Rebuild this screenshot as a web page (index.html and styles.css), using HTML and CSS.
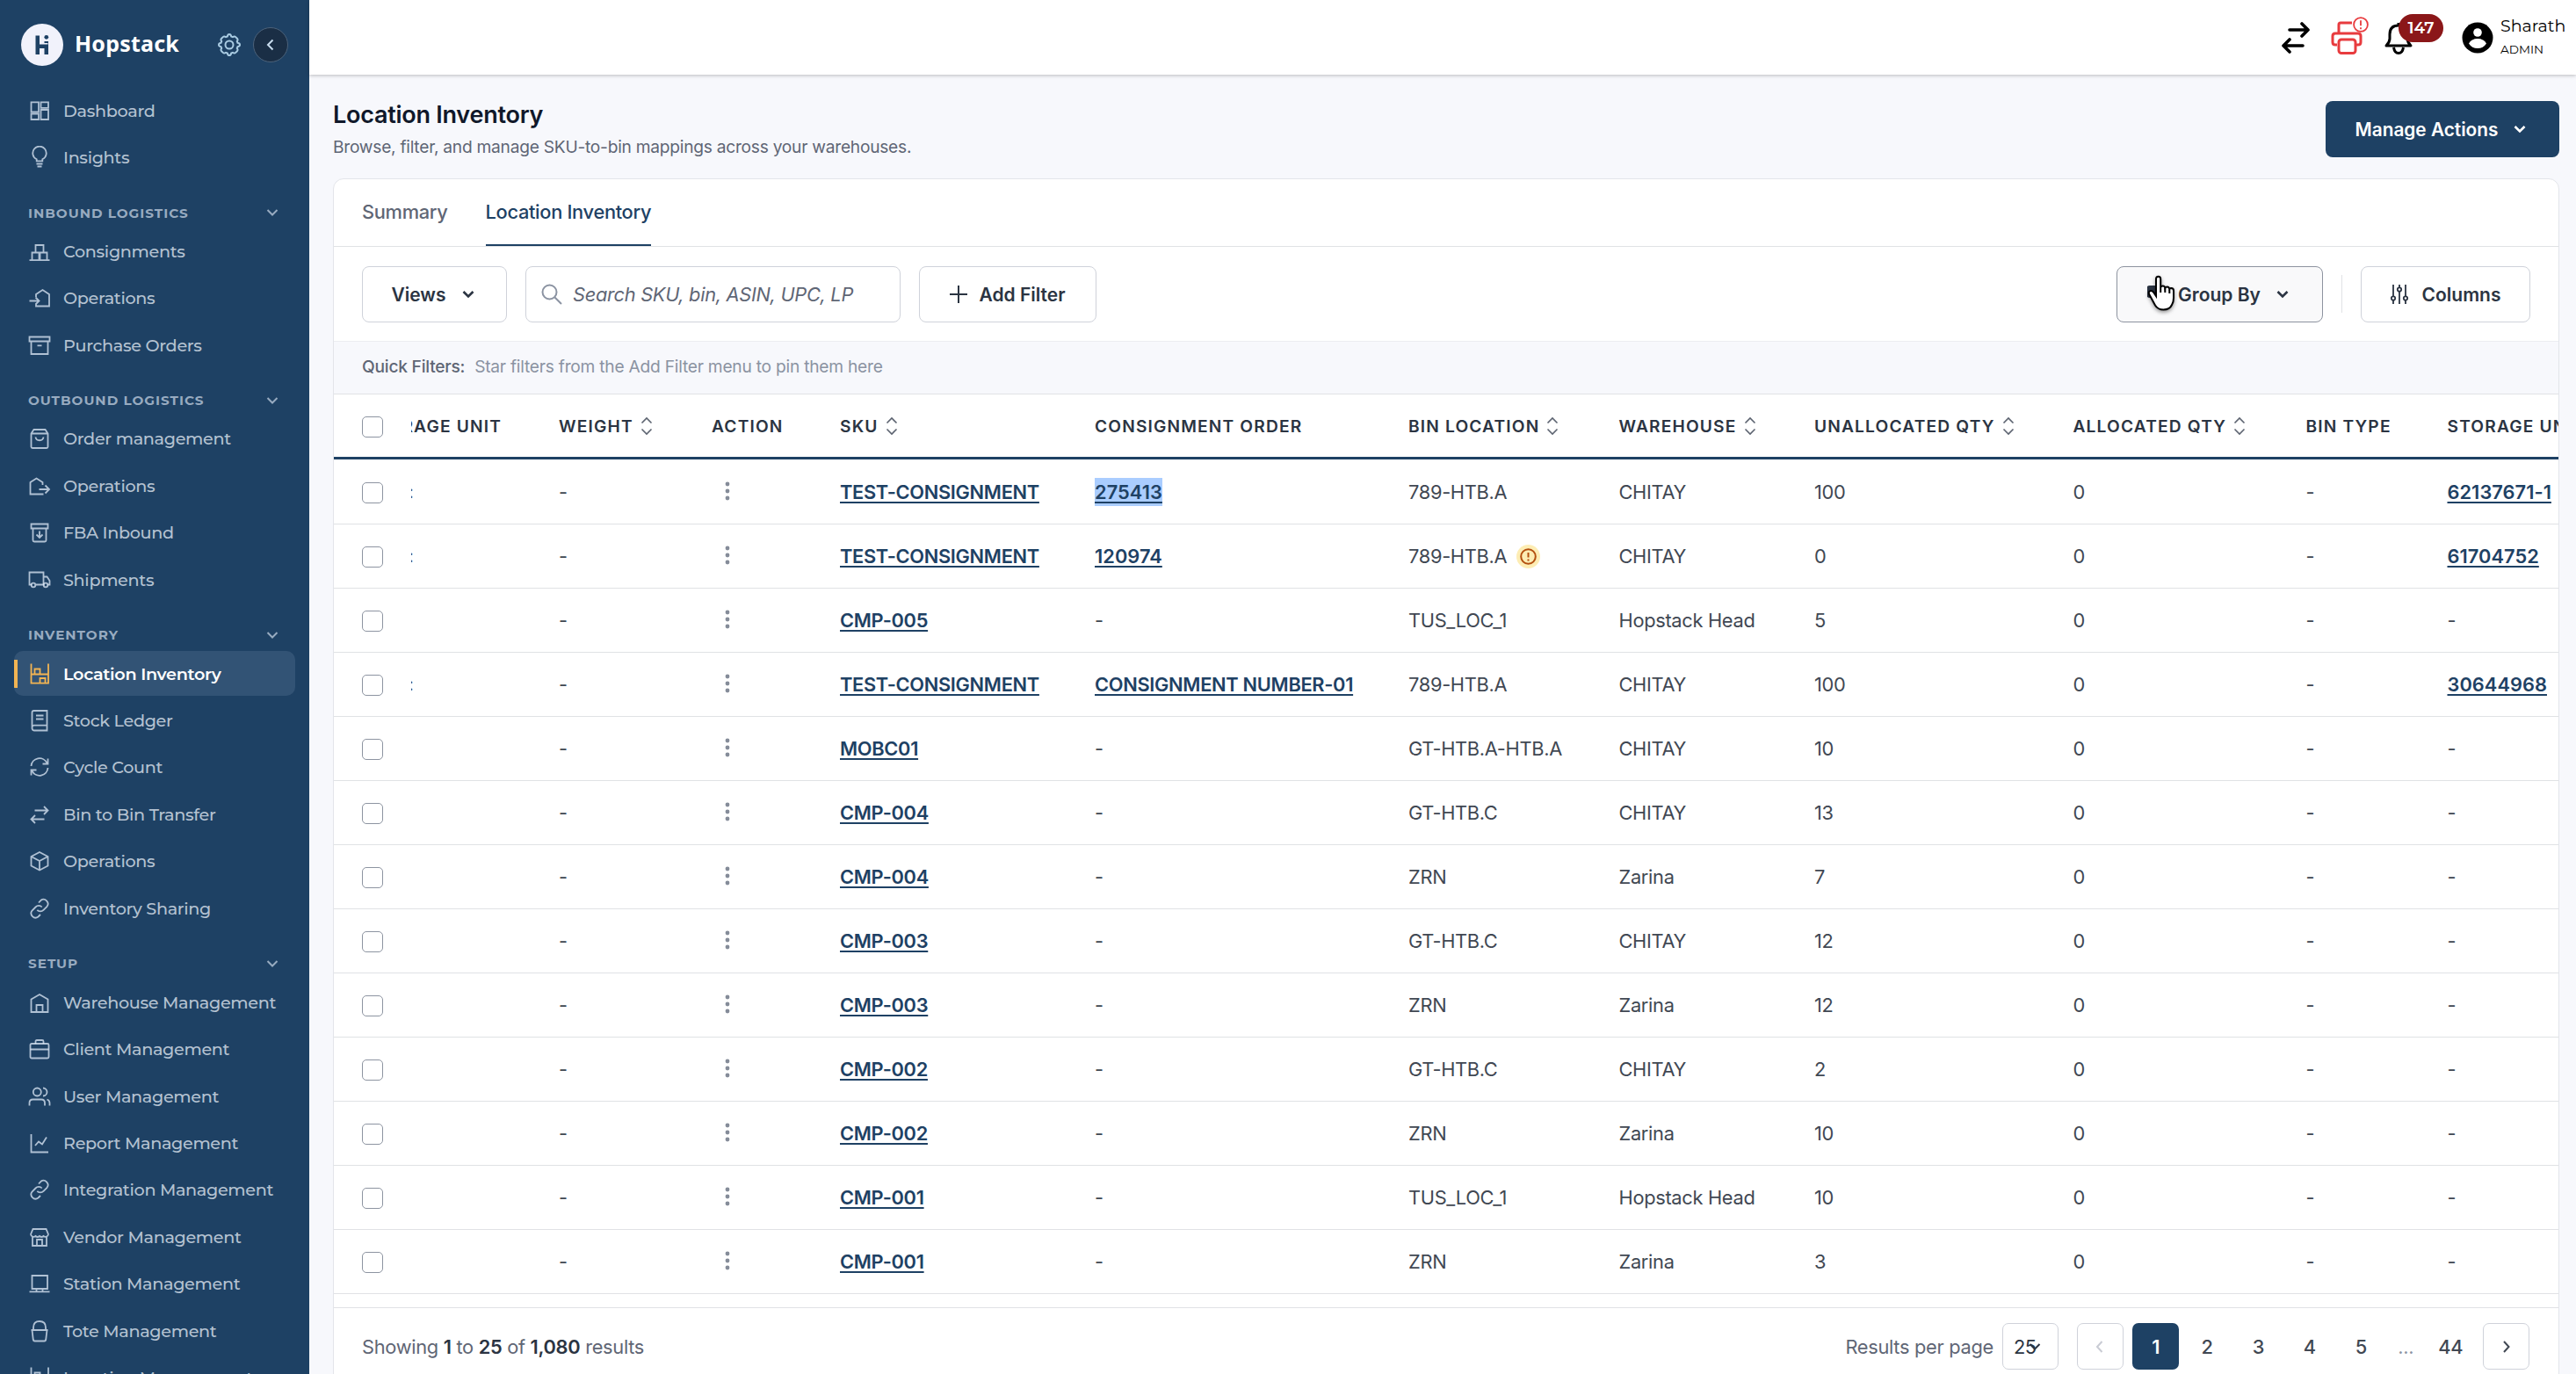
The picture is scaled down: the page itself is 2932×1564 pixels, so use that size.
FILE: index.html
```
<!DOCTYPE html>
<html lang="en">

<head>
    <meta charset="utf-8">
    <title>Location Inventory - Hopstack</title>
    <link rel="stylesheet" href="styles.css">
</head>

<body>
    <svg class="sprite">
        <symbol id="dashboard" viewBox="0 0 26 26"><path d="M3.5 3.3h8.5v11H3.5zM3.5 16.5H12v6.5H3.5zM14.5 3.3H23v6.5h-8.5zM14.5 12H23v11h-8.5z"/></symbol>
        <symbol id="insights" viewBox="0 0 26 26"><path d="M9.7 17.3v-2a7.7 7.7 0 1 1 6.6 0v2zM9.5 20.5h7M10.5 23.5h5"/></symbol>
        <symbol id="consignments" viewBox="0 0 26 26"><path d="M8.5 14V6h9v8M4.5 23v-8.5h8V23M13.5 23v-8.5h8V23M1.5 23.2h23"/></symbol>
        <symbol id="opsin" viewBox="0 0 26 26"><path d="M9 12V9l7.5-5 7.5 5v13.5H9V20M1.5 16.5h10M8.5 12.5l4 4-4 4"/></symbol>
        <symbol id="archive" viewBox="0 0 26 26"><path d="M1.5 3.5h23v5H1.5zM3.5 8.5V23h19V8.5M10.5 13.3h5"/></symbol>
        <symbol id="bag" viewBox="0 0 26 26"><path d="M3.5 7.5l3-4.5h13l3 4.5v15a1.500 1.500 0 0 1-1.500 1.500H5a1.500 1.500 0 0 1-1.500-1.500zM3.500 7.500h19M8.500 11.500c.7 5 8.300 5 9 0"/></symbol>
        <symbol id="opsout" viewBox="0 0 26 26"><path d="M16.500 12V9l-7-4.500L2.500 9v13.500h15M12.500 17h11M19.500 12.500L24 17l-4.500 4.500"/></symbol>
        <symbol id="fba" viewBox="0 0 26 26"><path d="M3.500 3.500h19v5h-19zM5.500 8.500V22q0 1.500 1.500 1.500h12q1.500 0 1.500-1.500V8.500M13 11.500v7M9.500 15.500L13 19l3.500-3.500"/></symbol>
        <symbol id="truck" viewBox="0 0 26 26"><path d="M4 18.500H1.500v-14h16v14H9M17.500 9.500h4l3 4.500v4.500h-2"/><circle cx="6" cy="19" r="2.300"/><circle cx="20" cy="19" r="2.300"/></symbol>
        <symbol id="rack" viewBox="0 0 26 26"><path d="M3.500 1.500v23M23 1.500v23M3.500 13.500H23M3.500 23.700H23M7.500 13V7.500h6V13M13.500 23.500V18h6v5.500"/></symbol>
        <symbol id="ledger" viewBox="0 0 26 26"><path d="M4.500 20.500V4q0-2 2-2h15v22.500h-15q-2-.5-2-3t2-2.800h15M9 7.500h8.500M9 11.500h8.500"/></symbol>
        <symbol id="cycle" viewBox="0 0 26 26"><path d="M3.500 12a9.500 9.500 0 0 1 18-3.500M22.500 3.500v6h-6M22.500 14a9.500 9.500 0 0 1-18 3.500M3.500 22.500v-6h6"/></symbol>
        <symbol id="swap" viewBox="0 0 26 26"><path d="M7.500 8.500h15M18 4l4.500 4.500L18 13M18.500 18.500h-15M8 14l-4.500 4.500L8 23"/></symbol>
        <symbol id="box" viewBox="0 0 26 26"><path d="M13 3l9.500 5v10.500l-9.500 5-9.500-5V8zM3.500 8l9.500 5 9.500-5M13 13v10.500"/></symbol>
        <symbol id="link" viewBox="0 0 26 26"><path d="M12 6.500l2.500-2.700a5 5 0 0 1 7 7l-4 4a5 5 0 0 1-7.200 0M14 20l-2.500 2.500a5 5 0 0 1-7-7l4-4a5 5 0 0 1 7.200 0"/></symbol>
        <symbol id="house" viewBox="0 0 26 26"><path d="M3.500 24V9.500L13 4l9.500 5.500V24zM9.500 24v-8h7v8"/></symbol>
        <symbol id="briefcase" viewBox="0 0 26 26"><rect x="2.500" y="7" width="21" height="16.500" rx="1.500"/><path d="M8.500 7V4.500Q8.500 3 10 3h6q1.500 0 1.500 1.500V7M2.500 13.500h21"/></symbol>
        <symbol id="users" viewBox="0 0 26 26"><circle cx="10.300" cy="8" r="4.500"/><path d="M1.500 23.500v-3q0-4 4-4H15q4 0 4 4v3M17 3.500a4.500 4.500 0 0 1 0 9M21.500 16.500q3 1 3 4v3"/></symbol>
        <symbol id="report" viewBox="0 0 26 26"><path d="M3.500 3v20.500H23M8 16l4-4.500 4 3 5-8"/></symbol>
        <symbol id="shop" viewBox="0 0 26 26"><path d="M5.500 4h15l2.500 6a3.300 3.300 0 0 1-5.500 2 3.300 3.300 0 0 1-4.500 0 3.300 3.300 0 0 1-4.500 0A3.300 3.300 0 0 1 3 10zM5 12.500V23h16V12.500M10 23v-7h6v7"/></symbol>
        <symbol id="laptop" viewBox="0 0 26 26"><path d="M4.500 4H22v15H4.500zM1.500 22.300h23M9.500 19.500V22M16.500 19.500V22"/></symbol>
        <symbol id="tote" viewBox="0 0 26 26"><path d="M3.500 12h19M4.500 12l1.300 11q.3 1.500 1.700 1.500h11q1.400 0 1.700-1.500l1.300-11M6 12V9q0-7 7-7t7 7v3"/></symbol>
        <symbol id="chevron" viewBox="0 0 14 14"><path d="M1.500 4L7 9.500 12.500 4"/></symbol>
        <symbol id="sort" viewBox="0 0 14 22"><path d="M1.500 7.500L7 2l5.500 5.500M1.500 14.500L7 20l5.500-5.500"/></symbol>
    </svg>

    <aside class="sidebar">
        <div class="brand">
            <svg class="logo" viewBox="0 0 48 48">
                <circle cx="24" cy="24" r="24" fill="#f1f2fb"/>
                <path fill="#1e4164" d="M16.500 13.500H21v10h9.500V21h.5v14h-4.500v-7H21v7h-4.500zM26.500 20H31v2h-4.500z"/>
                <circle cx="28.800" cy="15.300" r="2.400" fill="#1e4164"/>
            </svg>
            <span class="brand-name">Hopstack</span>
            <svg class="gear" viewBox="0 0 28 28"><path d="M14 2q1.800 0 2.200 2.500l1.700.7q2-1.400 3.300-.1l1.700 1.700q1.300 1.300-.1 3.300l.7 1.700Q26 12.200 26 14t-2.500 2.200l-.7 1.700q1.400 2 .1 3.300l-1.700 1.700q-1.300 1.300-3.300-.1l-1.700.7Q15.800 26 14 26t-2.200-2.500l-1.700-.7q-2 1.400-3.300.1l-1.700-1.700q-1.300-1.300.1-3.300l-.7-1.700Q2 15.800 2 14t2.500-2.200l.7-1.700q-1.400-2-.1-3.300l1.700-1.700q1.300-1.300 3.300.1l1.700-.7Q12.200 2 14 2z"/><circle cx="14" cy="14" r="4.500"/></svg>
            <div class="collapse"><svg viewBox="0 0 14 14"><path d="M9.500 1.500L4 7l5.500 5.500"/></svg></div>
        </div>
        <nav id="nav"></nav>
    </aside>

    <main>
        <header class="topbar">
            <svg class="top-swap" viewBox="0 0 34 36"><path d="M10 9h21M24 2l7 7-7 7M25 27H3M10 20l-7 7 7 7"/></svg>
            <div class="printer">
                <svg viewBox="0 0 36 38"><path d="M9 13V4q0-2 2-2h13M7 27H5q-3 0-3-3v-7q0-3 3-3h26q3 0 3 3v7q0 3-3 3h-2"/><rect x="9" y="21" width="19" height="15.500" rx="3" fill="#fff"/></svg>
                <svg class="alert" viewBox="0 0 18 18"><circle cx="9" cy="9" r="7.900"/><path d="M9 4.300v6M9 12.200v2"/></svg>
            </div>
            <div class="bell">
                <svg viewBox="0 0 36 38"><path d="M4 28q4-4 4-8v-5Q8 5 18 5t10 10v5q0 4 4 8zM18 5V2M12.500 30q1 6.500 5.500 6.500t5.500-6.500"/></svg>
                <span class="badge">147</span>
            </div>
            <svg class="avatar" viewBox="0 0 36 36"><circle cx="18" cy="18" r="17.500" fill="#000"/><circle cx="18" cy="12" r="4.800" fill="#fff"/><path d="M8 24.500Q11 19 18 19t10 5.500Q24.500 30 18 30T8 24.500z" fill="#fff"/></svg>
            <div class="who">
                <span class="name">Sharath</span>
                <span class="role">ADMIN</span>
            </div>
        </header>

        <div class="page-head">
            <div>
                <h1>Location Inventory</h1>
                <p>Browse, filter, and manage SKU-to-bin mappings across your warehouses.</p>
            </div>
            <button class="primary">Manage Actions <svg class="chev"><use href="#chevron"/></svg></button>
        </div>

        <section class="card">
            <div class="tabs">
                <a class="tab">Summary</a>
                <a class="tab active">Location Inventory</a>
            </div>

            <div class="toolbar">
                <button class="btn views">Views <svg class="chev"><use href="#chevron"/></svg></button>
                <div class="search">
                    <svg viewBox="0 0 24 24"><circle cx="9.500" cy="9.500" r="8"/><path d="M15.500 15.500L23 23"/></svg>
                    <span>Search SKU, bin, ASIN, UPC, LP</span>
                </div>
                <button class="btn add"><svg class="plus" viewBox="0 0 20 20"><path d="M10 0v20M0 10h20"/></svg>Add Filter</button>
                <button class="btn group"><svg class="layers" viewBox="0 0 20 24"><rect x="0" y="3" width="11" height="12" rx="3"/></svg>Group By <svg class="chev"><use href="#chevron"/></svg>
                    <svg class="cursor" viewBox="0 0 32 42"><path d="M10 24V4.500q0-2.800 2.600-2.800t2.600 2.800V14q.3-1.500 2.500-1.500t2.600 2.300q.6-1.300 2.500-1.300t2.500 2.600q.6-1 2-1Q30 15.300 30 18v8q0 5-2 8-2.500 5.500-9.500 5.500-6.500 0-9.500-5L2.500 22.500q-1.700-3 .5-4.200 2-.9 4 1.200z"/><path d="M15.200 14v6M20.300 15v5M25.300 16.500V21"/></svg>
                </button>
                <div class="divider"></div>
                <button class="btn columns"><svg class="sliders" viewBox="0 0 20 22"><path d="M3 0v13M3 18v4M10 0v3M10 8v14M17 0v13M17 18v4"/><circle cx="3" cy="15.500" r="2.200"/><circle cx="10" cy="5.500" r="2.200"/><circle cx="17" cy="15.500" r="2.200"/></svg>Columns</button>
            </div>

            <div class="quick"><b>Quick Filters:</b><span>Star filters from the Add Filter menu to pin them here</span></div>

            <div class="row head">
                <div><i class="check"></i></div>
                <div class="cut"><span>STORAGE UNIT</span></div>
                <div>WEIGHT<svg class="sort"><use href="#sort"/></svg></div>
                <div>ACTION</div>
                <div>SKU<svg class="sort"><use href="#sort"/></svg></div>
                <div>CONSIGNMENT ORDER</div>
                <div>BIN LOCATION<svg class="sort"><use href="#sort"/></svg></div>
                <div>WAREHOUSE<svg class="sort"><use href="#sort"/></svg></div>
                <div>UNALLOCATED QTY<svg class="sort"><use href="#sort"/></svg></div>
                <div>ALLOCATED QTY<svg class="sort"><use href="#sort"/></svg></div>
                <div>BIN TYPE</div>
                <div>STORAGE UNIT</div>
            </div>
            <div id="rows"></div>

            <footer>
                <div class="showing">Showing <b>1</b> to <b>25</b> of <b>1,080</b> results</div>
                <span class="per">Results per page</span>
                <div class="select">25<svg class="chev"><use href="#chevron"/></svg></div>
                <div class="pages">
                    <span class="page arrow prev"><svg viewBox="0 0 14 14"><path d="M9.500 1L4 7l5.500 6"/></svg></span>
                    <span class="page current">1</span>
                    <span class="page">2</span>
                    <span class="page">3</span>
                    <span class="page">4</span>
                    <span class="page">5</span>
                    <span class="dots">...</span>
                    <span class="page">44</span>
                    <span class="page arrow next"><svg viewBox="0 0 14 14"><path d="M4 1l5.500 6L4 13"/></svg></span>
                </div>
            </footer>
        </section>
    </main>

    <script>
        // [icon, label], section titles have no icon
        const menu = [
            ["dashboard", "Dashboard"], ["insights", "Insights"],
            ["", "INBOUND LOGISTICS"],
            ["consignments", "Consignments"], ["opsin", "Operations"], ["archive", "Purchase Orders"],
            ["", "OUTBOUND LOGISTICS"],
            ["bag", "Order management"], ["opsout", "Operations"], ["fba", "FBA Inbound"], ["truck", "Shipments"],
            ["", "INVENTORY"],
            ["rack", "Location Inventory"], ["ledger", "Stock Ledger"], ["cycle", "Cycle Count"],
            ["swap", "Bin to Bin Transfer"], ["box", "Operations"], ["link", "Inventory Sharing"],
            ["", "SETUP"],
            ["house", "Warehouse Management"], ["briefcase", "Client Management"], ["users", "User Management"],
            ["report", "Report Management"], ["link", "Integration Management"], ["shop", "Vendor Management"],
            ["laptop", "Station Management"], ["tote", "Tote Management"], ["rack", "Location Management"]
        ]

        // sku, consignment, bin, warehouse, unallocated, storage unit
        const items = [
            ["TEST-CONSIGNMENT", "275413", "789-HTB.A", "CHITAY", 100, "62137671-1"],
            ["TEST-CONSIGNMENT", "120974", "789-HTB.A", "CHITAY", 0, "61704752"],
            ["CMP-005", "", "TUS_LOC_1", "Hopstack Head", 5, ""],
            ["TEST-CONSIGNMENT", "CONSIGNMENT NUMBER-01", "789-HTB.A", "CHITAY", 100, "30644968"],
            ["MOBC01", "", "GT-HTB.A-HTB.A", "CHITAY", 10, ""],
            ["CMP-004", "", "GT-HTB.C", "CHITAY", 13, ""],
            ["CMP-004", "", "ZRN", "Zarina", 7, ""],
            ["CMP-003", "", "GT-HTB.C", "CHITAY", 12, ""],
            ["CMP-003", "", "ZRN", "Zarina", 12, ""],
            ["CMP-002", "", "GT-HTB.C", "CHITAY", 2, ""],
            ["CMP-002", "", "ZRN", "Zarina", 10, ""],
            ["CMP-001", "", "TUS_LOC_1", "Hopstack Head", 10, ""],
            ["CMP-001", "", "ZRN", "Zarina", 3, ""]
        ]

        document.getElementById("nav").innerHTML = menu.map(([icon, label]) => icon
            ? `<a class="item${label == "Location Inventory" ? " selected" : ""}"><svg><use href="#${icon}"/></svg><span>${label}</span></a>`
            : `<div class="group-title"><span>${label}</span><svg><use href="#chevron"/></svg></div>`
        ).join("")

        const link = (text, cls = "") => {
            if (!text) return "-"
            if (/^[\d-]+$/.test(text)) cls += " num"
            return `<a class="link ${cls}">${text}</a>`
        }
        const warn = `<svg class="warn" viewBox="0 0 27 27"><circle class="halo" cx="13.500" cy="13.500" r="13.500"/><circle cx="13.500" cy="13.500" r="8.300"/><path d="M13.500 9v5.500M13.500 16.500v2"/></svg>`

        document.getElementById("rows").innerHTML = items.map(([sku, order, bin, house, qty, unit], i) => `
            <div class="row">
                <div><i class="check"></i></div>
                <div class="cut">${unit ? ":" : ""}</div>
                <div>-</div>
                <div><svg class="more" viewBox="0 0 6 22"><circle cx="3" cy="3" r="2.400"/><circle cx="3" cy="11" r="2.400"/><circle cx="3" cy="19" r="2.400"/></svg></div>
                <div>${link(sku)}</div>
                <div>${link(order, i == 0 ? "marked" : "")}</div>
                <div>${bin}${i == 1 ? warn : ""}</div>
                <div>${house}</div>
                <div>${qty}</div>
                <div>0</div>
                <div>-</div>
                <div>${link(unit)}</div>
            </div>`).join("")
    </script>
</body>

</html>
```
FILE: styles.css
```
:root {
    --navy: #1e4164;
    --bg: #f7f8fc;
    --line: #e0e2e5;
    --border: #cfd2da;
    --text: #414853;
    --dark: #2b3442;
    --muted: #5f6675;
    --soft: #8b93a2;
}

* {
    box-sizing: border-box;
}

body {
    margin: 0;
    display: flex;
    height: 1564px;
    overflow: hidden;
    background-color: var(--bg);
    font-family: "Inter", "Liberation Sans", sans-serif;
    font-size: 21.8px;
    letter-spacing: -0.3px;
    color: var(--text);
}

svg {
    fill: none;
    stroke: currentColor;
    stroke-width: 2;
    flex: none;
}

.sprite {
    display: none;
}

/* sidebar */
.sidebar {
    width: 352px;
    flex: none;
    background-color: var(--navy);
    font-family: "Montserrat", "Inter", sans-serif;
    overflow: hidden;
}

.brand {
    display: flex;
    align-items: flex-start;
    height: 99px;
    padding: 27px 24px 0;
}

.logo {
    width: 48px;
    height: 48px;
    stroke: none;
}

.brand-name {
    flex: 1;
    margin-left: 13px;
    color: white;
    font-family: "Noto Sans", sans-serif;
    font-size: 25px;
    font-weight: 700;
    letter-spacing: 0.2px;
    line-height: 45px;
}

.gear {
    width: 28px;
    height: 28px;
    margin-top: 10px;
    margin-right: 13px;
    color: #a9cbe2;
}

.collapse {
    display: flex;
    align-items: center;
    justify-content: center;
    width: 40px;
    height: 40px;
    margin-top: 4px;
    border: 1px solid #4c627a;
    border-radius: 50%;
    background-color: #1a2e45;
    color: #c8dcee;
}

.collapse svg {
    width: 14px;
    height: 14px;
}

#nav {
    display: flex;
    flex-direction: column;
}

.item {
    display: flex;
    align-items: center;
    flex: none;
    height: 51px;
    margin: 1px 16px 1.45px;
    padding-left: 15.5px;
    border-radius: 10px;
    color: #b4c2d1;
    font-size: 19.2px;
    font-weight: 500;
    letter-spacing: -0.32px;
}

.item svg {
    width: 26px;
    height: 26px;
    margin-right: 14.5px;
    color: rgba(225, 236, 250, 0.75);
    stroke-width: 1.8;
}

.item.selected {
    background: linear-gradient(#f2b453, #f2b453) 0 50% / 4px 32px no-repeat #325375;
    color: white;
    font-weight: 600;
}

.item.selected svg {
    color: #f2b453;
}

.group-title {
    display: flex;
    align-items: center;
    justify-content: space-between;
    flex: none;
    height: 53.4px;
    padding: 19px 35px 0 32px;
    color: #98abc0;
    font-size: 15.2px;
    font-weight: 700;
    letter-spacing: 1px;
}

.group-title svg {
    width: 14px;
    height: 14px;
}

/* top bar */
main {
    flex: 1;
    min-width: 0;
}

.topbar {
    display: flex;
    align-items: center;
    justify-content: flex-end;
    height: 85px;
    padding-right: 13px;
    background-color: white;
    box-shadow: 0 1px 4px rgba(0, 0, 0, 0.25);
    color: black;
    font-family: "Montserrat", "Inter", sans-serif;
    letter-spacing: 0;
}

.top-swap {
    width: 34px;
    height: 36px;
    margin-right: 23px;
    stroke-width: 3.6;
    stroke-linecap: round;
    stroke-linejoin: round;
}

.printer {
    position: relative;
    height: 38px;
    margin-right: 23px;
    color: #e83b3e;
}

.printer svg {
    width: 36px;
    height: 38px;
    stroke-width: 3;
}

.printer .alert {
    position: absolute;
    left: 25px;
    top: -5px;
    width: 18px;
    height: 18px;
    stroke-width: 1.8;
    fill: white;
}

.bell {
    position: relative;
    height: 38px;
    margin-right: 54px;
}

.bell svg {
    width: 36px;
    height: 38px;
    stroke-width: 3;
    stroke-linejoin: round;
}

.badge {
    position: absolute;
    left: 18px;
    top: -8px;
    width: 51px;
    height: 32px;
    border-radius: 16px;
    background-color: #8b1719;
    color: white;
    font-size: 18.5px;
    font-weight: 600;
    line-height: 31px;
    text-align: center;
}

.avatar {
    width: 36px;
    height: 36px;
    margin-right: 8px;
    stroke: none;
}

.who {
    display: flex;
    flex-direction: column;
    width: 73px;
    gap: 4px;
    padding-bottom: 2px;
}

.name {
    font-size: 19px;
    line-height: 24px;
}

.role {
    font-size: 13.6px;
    line-height: 20px;
}

/* page header */
.page-head {
    display: flex;
    justify-content: space-between;
    height: 118px;
    padding: 30px 19px 0 27px;
}

h1 {
    margin: 0;
    color: #10182a;
    font-size: 27px;
    font-weight: 600;
    letter-spacing: -0.25px;
    line-height: 32px;
}

p {
    margin: 6px 0 0;
    color: var(--muted);
    font-size: 19.2px;
    letter-spacing: -0.26px;
    line-height: 28px;
}

button {
    display: flex;
    align-items: center;
    justify-content: center;
    height: 64px;
    padding: 0;
    border: 1px solid var(--border);
    border-radius: 8px;
    background-color: white;
    color: var(--dark);
    font-family: inherit;
    font-size: 20.8px;
    font-weight: 600;
}

.btn {
    padding-top: 1px;
    font-size: 21px;
}

.chev {
    width: 14px;
    height: 14px;
    margin-left: 18px;
    stroke-width: 2.6;
}

.primary {
    width: 266px;
    padding-right: 4px;
    border: none;
    background-color: var(--navy);
    color: white;
}

/* card */
.card {
    height: 1400px;
    margin: 0 19px 0 27px;
    border: 1px solid #e3e5ea;
    border-radius: 12px;
    background-color: white;
    overflow: hidden;
}

.tabs {
    display: flex;
    gap: 43px;
    height: 77px;
    padding-left: 32px;
    border-bottom: 1px solid var(--line);
}

.tab {
    height: 76px;
    color: var(--muted);
    font-weight: 500;
    line-height: 75px;
}

.tab.active {
    border-bottom: 2px solid var(--navy);
    color: var(--navy);
}

.toolbar {
    display: flex;
    align-items: center;
    height: 107px;
    padding: 0 32px;
}

.views {
    width: 165px;
    padding-right: 4px;
}

.search {
    display: flex;
    align-items: center;
    width: 427px;
    height: 64px;
    margin: 0 21px;
    padding-left: 17px;
    border: 1px solid var(--border);
    border-radius: 8px;
    color: var(--muted);
    font-style: italic;
}

.search svg {
    width: 24px;
    height: 24px;
    margin-right: 12px;
    color: var(--soft);
}

.add {
    width: 202px;
}

.plus {
    width: 20px;
    height: 20px;
    margin-right: 13px;
}

.group {
    position: relative;
    width: 235px;
    margin-left: auto;
    padding-right: 4px;
    border-color: #8d939f;
    background-color: #f9f9fa;
}

.layers {
    width: 20px;
    height: 24px;
    margin-right: 15px;
    fill: var(--dark);
}

.cursor {
    position: absolute;
    left: 34px;
    top: 9px;
    width: 32px;
    height: 42px;
    fill: white;
    stroke: black;
    filter: drop-shadow(0 2px 2px rgba(0, 0, 0, 0.4));
}

.divider {
    width: 1px;
    height: 43px;
    margin: 0 21px;
    background-color: var(--line);
}

.columns {
    width: 193px;
}

.sliders {
    width: 20px;
    height: 22px;
    margin-right: 16px;
    stroke-width: 1.8;
}

.quick {
    display: flex;
    align-items: center;
    gap: 11px;
    height: 61px;
    padding: 0 0 3px 32px;
    border-top: 1px solid #ecedf1;
    border-bottom: 1px solid var(--line);
    background-color: var(--bg);
    color: var(--soft);
    font-size: 19.2px;
    letter-spacing: -0.24px;
}

.quick b {
    color: var(--muted);
    font-weight: 500;
}

/* table */
.row {
    display: grid;
    grid-template-columns: 55.5px 168.5px 174px 146px 290px 357px 239.5px 222.5px 294.5px 265px 161px 200px;
    height: 73px;
    padding-left: 32px;
    border-bottom: 1px solid var(--line);
}

.row > div {
    display: flex;
    align-items: center;
    white-space: nowrap;
}

.head {
    height: 74px;
    border-bottom: 3px solid var(--navy);
    color: var(--dark);
    font-size: 19.2px;
    font-weight: 600;
    letter-spacing: 1.15px;
}

#rows {
    padding-top: 1px;
}

.check {
    width: 24px;
    height: 24px;
    margin-top: 2px;
    border: 1px solid #8d94a1;
    border-radius: 5px;
}

.row > .cut {
    justify-content: flex-end;
    width: 103.5px;
    overflow: hidden;
}

#rows .cut {
    justify-content: flex-start;
    font-size: 20px;
    text-indent: -2.5px;
}

.sort {
    width: 14px;
    height: 22px;
    margin-left: 8px;
    stroke-width: 1.6;
    color: #5c6370;
}

.more {
    width: 6px;
    height: 22px;
    margin-left: 15px;
    margin-top: -2px;
    fill: #858c99;
    stroke: none;
}

.link {
    color: var(--navy);
    font-weight: 600;
    text-decoration: underline;
    text-decoration-thickness: 2px;
    text-underline-offset: 3px;
}

.num {
    letter-spacing: 0.05px;
}

.marked {
    padding: 3px 0;
    background-color: #aacdff;
}

.warn {
    width: 27px;
    height: 27px;
    margin-left: 11px;
    color: #b4500f;
}

.warn .halo {
    fill: #fdedb4;
    stroke: none;
}

/* footer */
footer {
    display: flex;
    align-items: center;
    height: 88px;
    margin-top: 15px;
    padding: 0 33px 0 32px;
    border-top: 1px solid var(--line);
    color: var(--muted);
}

.showing {
    flex: 1;
}

.showing b {
    color: var(--dark);
    font-weight: 600;
}

.select {
    display: flex;
    align-items: center;
    width: 64px;
    height: 53px;
    margin: 0 21px 0 10px;
    padding-left: 12px;
    border: 1px solid var(--border);
    border-radius: 7px;
    color: var(--dark);
}

.select .chev {
    margin-left: -9px;
    stroke-width: 2;
}

.pages {
    display: flex;
    align-items: center;
    gap: 5.6px;
}

.page {
    display: flex;
    align-items: center;
    justify-content: center;
    width: 52.8px;
    height: 53px;
    border-radius: 7px;
    color: var(--text);
    font-weight: 500;
}

.page.current {
    background-color: var(--navy);
    color: white;
    font-weight: 600;
}

.arrow {
    border: 1px solid var(--border);
}

.arrow svg {
    width: 14px;
    height: 14px;
}

.prev {
    margin-right: 5px;
    color: #c9ccd4;
}

.next {
    margin-left: 5px;
}

.dots {
    width: 38px;
    color: var(--soft);
    text-align: center;
}
```
